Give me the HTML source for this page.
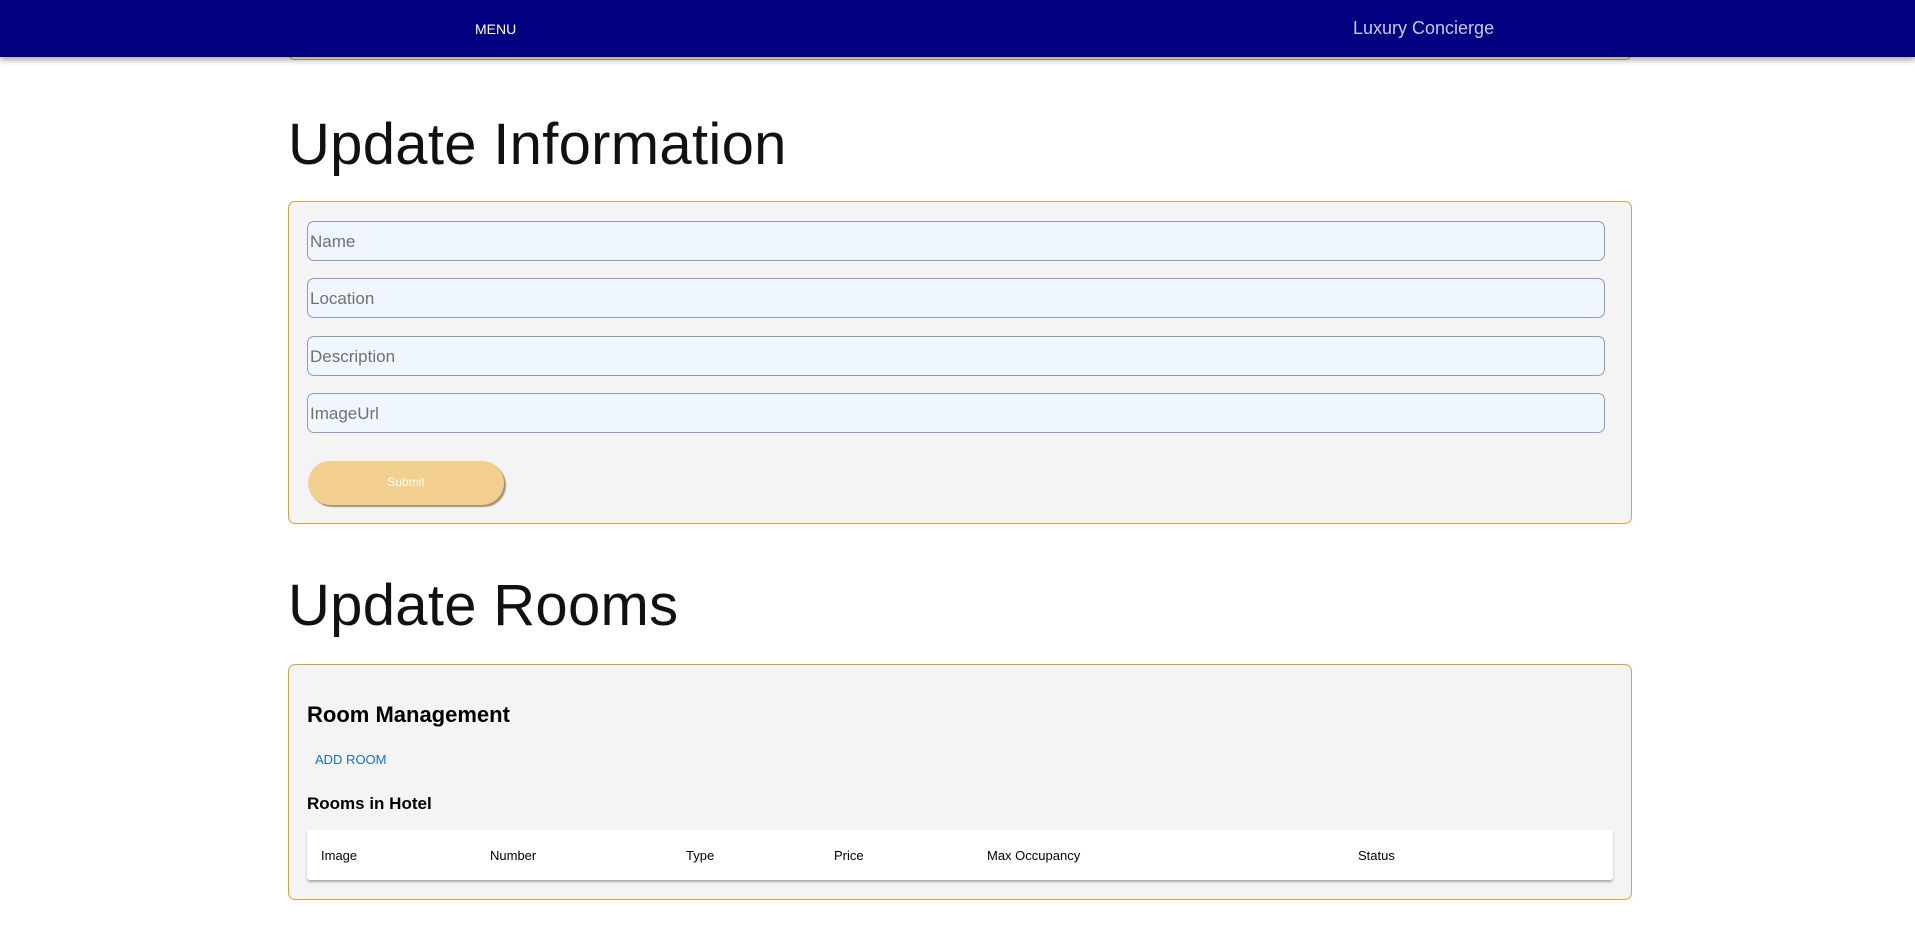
<!DOCTYPE html>
<html><head><style>
*{box-sizing:border-box;margin:0;padding:0}
body{width:1915px;height:925px;overflow:hidden;background:#fff;font-family:"Liberation Sans",sans-serif;position:relative}
.nav{position:absolute;left:0;top:0;width:1915px;height:57px;background:#000080;box-shadow:0 3px 6px rgba(0,0,0,.35);z-index:5}
.nav .m{position:absolute;left:475px;top:21px;color:#fff;font-size:14px}
.nav .l{position:absolute;left:1353px;top:18px;color:#c8c8e8;font-size:18px;font-weight:300}
.box{position:absolute;left:288px;width:1344px;border:1px solid #d4a640;border-radius:7px;background:#f4f4f4}
h1{position:absolute;left:288px;font-weight:300;font-size:58px;color:#111;letter-spacing:0.3px}
.in{position:absolute;left:18px;width:1298px;height:40px;border:1px solid #8f9ac2;border-radius:7px;background:#eff6fd;color:#707070;font-size:17px;padding:10px 2px}
.btn{position:absolute;left:19px;top:259px;width:196px;height:44px;border-radius:22px;background:#f2cf8f;box-shadow:2px 2px 1px #a89270;color:#fff;font-size:12px;text-align:center;line-height:42px}
.t{position:absolute;font-size:13px;color:#000;top:18px}
</style></head><body>
<div class="nav"><div class="m">MENU</div><div class="l">Luxury Concierge</div></div>
<div class="box" style="top:-10px;height:70px"></div>
<h1 style="top:111px">Update Information</h1>
<div class="box" style="top:201px;height:323px">
<div class="in" style="top:19px">Name</div>
<div class="in" style="top:76px">Location</div>
<div class="in" style="top:134px">Description</div>
<div class="in" style="top:191px">ImageUrl</div>
<div class="btn">Submit</div>
</div>
<h1 style="top:572px">Update Rooms</h1>
<div class="box" style="top:664px;height:236px">
<div style="position:absolute;left:18px;top:37px;font-size:22px;font-weight:bold">Room Management</div>
<div style="position:absolute;left:26px;top:87px;font-size:13px;color:#1a6fc4">ADD ROOM</div>
<div style="position:absolute;left:18px;top:129px;font-size:17px;font-weight:bold">Rooms in Hotel</div>
<div style="position:absolute;left:18px;top:165px;width:1306px;height:50px;background:#fff;border-radius:3px;box-shadow:0 2px 2px rgba(0,0,0,.3)">
<div class="t" style="left:14px">Image</div>
<div class="t" style="left:183px">Number</div>
<div class="t" style="left:379px">Type</div>
<div class="t" style="left:527px">Price</div>
<div class="t" style="left:680px">Max Occupancy</div>
<div class="t" style="left:1051px">Status</div>
</div>
</div>
</body></html>
